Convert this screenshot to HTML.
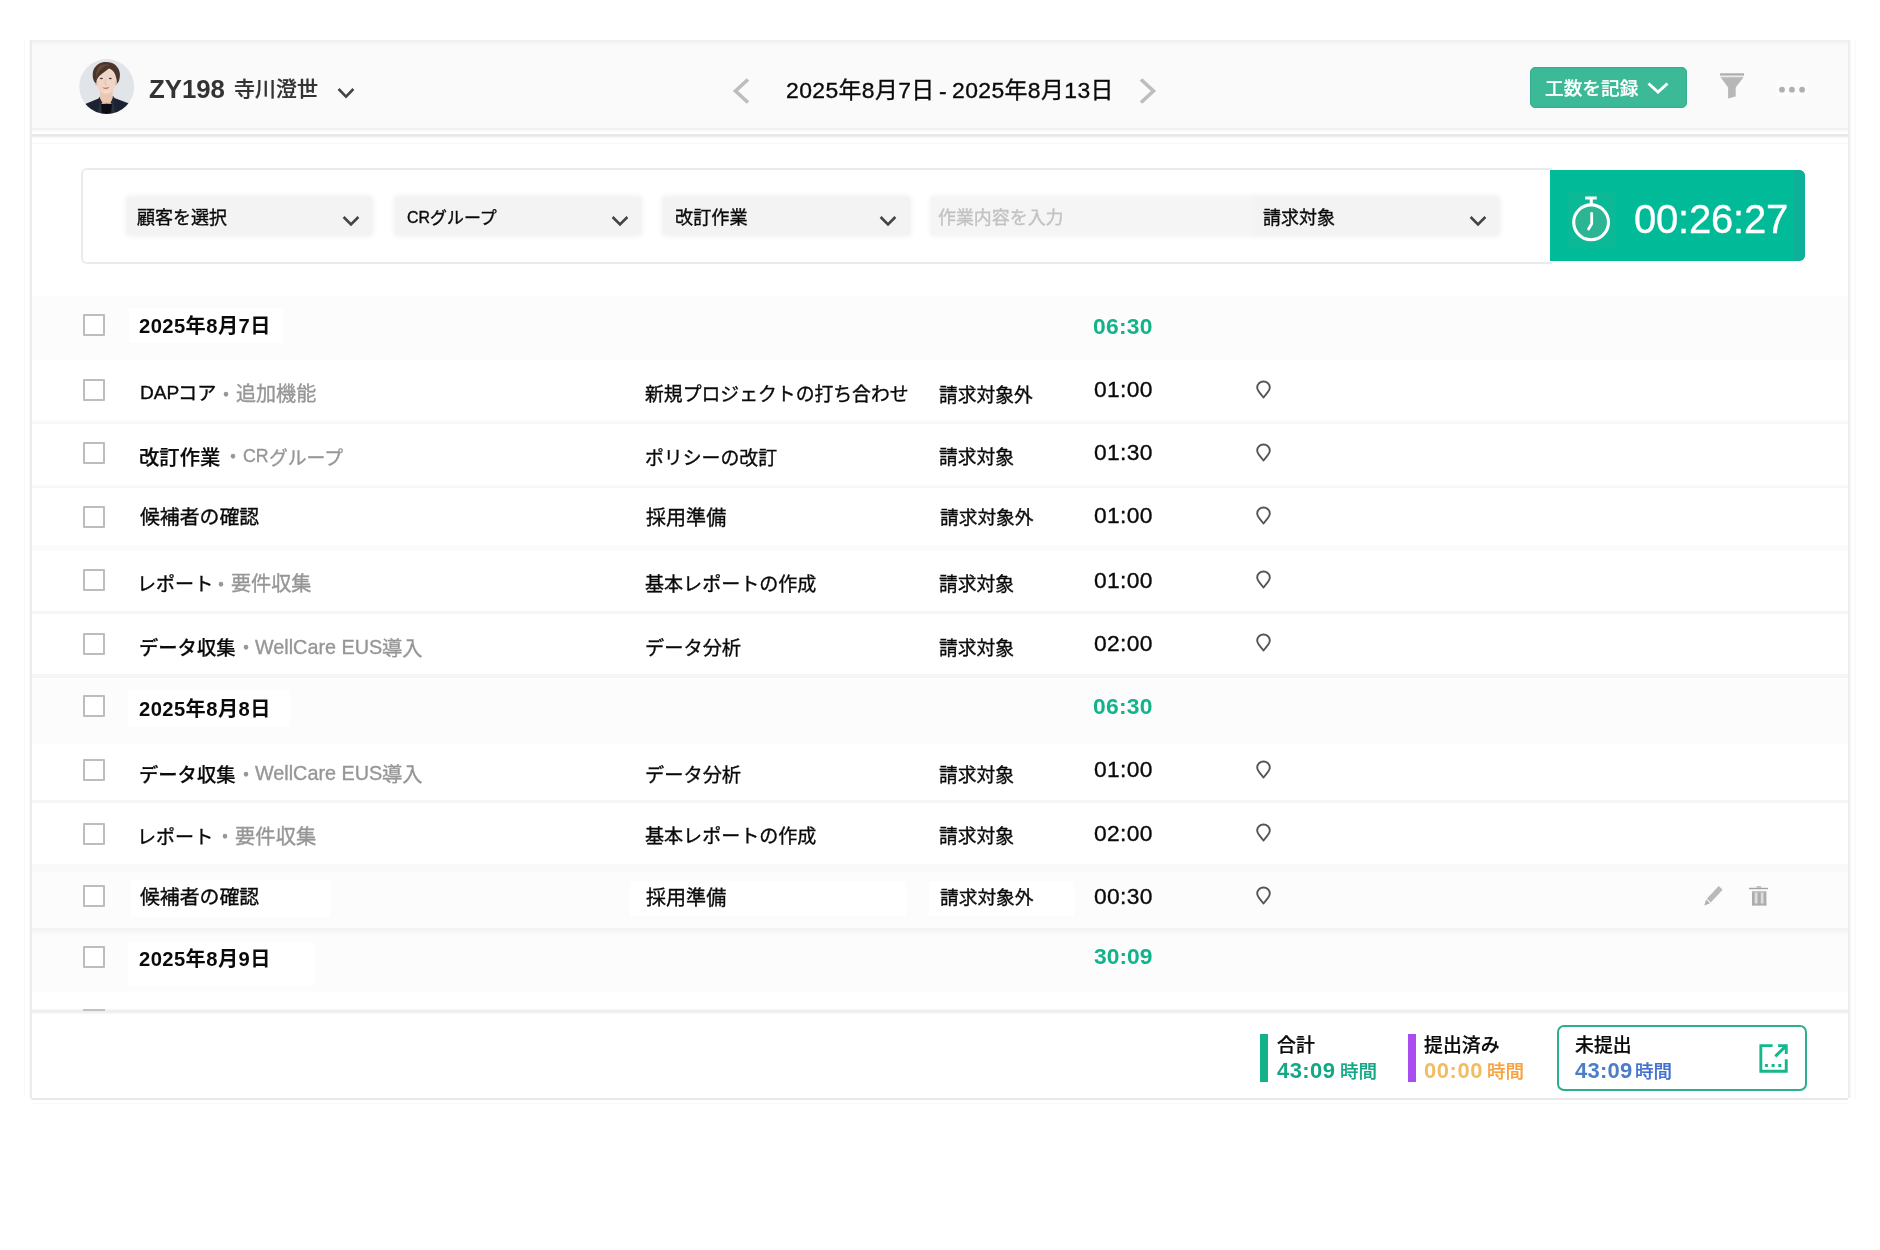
<!DOCTYPE html>
<html lang="ja">
<head>
<meta charset="utf-8">
<title>工数管理</title>
<style>
*{box-sizing:border-box;margin:0;padding:0}
html,body{width:1880px;height:1250px;background:#fff;overflow:hidden}
body{font-family:"Liberation Sans","Noto Sans CJK JP",sans-serif;color:#0a0a0a;position:relative}
.abs{position:absolute}
.t{position:absolute;white-space:nowrap;line-height:1;will-change:transform;-webkit-text-stroke:0.35px currentColor}
#frame{position:absolute;left:32px;top:40px;width:1816px;height:1058px;background:#fff}
.fl{position:absolute;left:29px;top:40px;width:3px;height:1058px;background:linear-gradient(to right,#fafafa,#f0f0f0 40%,#e8e8e8)}
.fr{position:absolute;left:1848px;top:40px;width:3px;height:1058px;background:linear-gradient(to right,#eaeaea,#f0f0f0 50%,#fafafa)}
.fb{position:absolute;left:31px;top:1097.6px;width:1817px;height:2.6px;background:linear-gradient(to bottom,#f0f0f0,#e7e7e7 40%,#e9e9e9)}
.fo{position:absolute;background:#f9f9f9}
#hdr{position:absolute;left:32px;top:40px;width:1816px;height:104px;background:linear-gradient(to bottom,#eeeeee 0,#f3f3f3 2px,#fafafa 6px,#fafafa 87.5px,#f1f1f1 88px,#f1f1f1 89.5px,#f9f9f9 90px,#ffffff 93.5px,#e9e9e9 94.3px,#e9e9e9 96.3px,#f6f6f6 97px,#ffffff 99px,#ffffff 102.5px,#f8f8f8 103px,#f8f8f8 104px)}
/* header */
#logbtn{position:absolute;left:1529.5px;top:67px;width:157px;height:40.5px;background:#3cb997;border:1px solid #35ad8c;border-radius:5px}
/* timer panel */
#panel{position:absolute;left:81px;top:168px;width:1471px;height:96px;border:2.5px solid #ebebeb;border-right:none;border-radius:6px 0 0 6px;background:#fff}
.sel{position:absolute;top:197px;height:38px;background:#f3f3f3;border-radius:3px;box-shadow:0 0 5px 2px #f3f3f3}
.sel svg{position:absolute;top:18px}
#inp{position:absolute;left:931px;top:197px;width:326px;height:38px;background:#f5f5f5;border-radius:3px 0 0 3px;box-shadow:0 0 5px 2px #f5f5f5}
#timer{position:absolute;left:1550px;top:170px;width:255px;height:91px;background:#00ba98;border-radius:0 6px 6px 0;overflow:hidden}
#timer .dk{position:absolute;right:0;top:0;width:11px;height:100%;background:#0fb09a}
#timer .ib{position:absolute;left:18px;top:22px;width:48px;height:56px;background:#0bb996}
/* rows */
.band{position:absolute;left:32px;width:1816px;background:#fafafa}
.sep{position:absolute;left:32px;width:1816px;height:2px;background:#f4f4f4}
.cb{position:absolute;left:83px;width:22px;height:22px;border:2px solid #bdbdbd;background:#fff;border-radius:1px}
.lbl{position:absolute;background:#fff}
.pin{position:absolute;left:1255px;width:17px;height:20px}
/* footer */
#ftop{position:absolute;left:32px;top:1009px;width:1816px;height:4.5px;background:linear-gradient(to bottom,#f8f8f8,#ececec 45%,#efefef 60%,#fafafa)}
#fbg{position:absolute;left:32px;top:1013px;width:1816px;height:84px;background:#fff}
.bar{position:absolute;top:1034px;width:8px;height:48px}
#ubox{position:absolute;left:1556.5px;top:1025px;width:250px;height:66.3px;border:2px solid #2bb08d;border-radius:7px;background:#fff}
</style>
</head>
<body>
<div id="frame"></div>
<div class="fl"></div><div class="fr"></div><div class="fb"></div>
<div class="fo" style="left:24px;top:40px;width:1px;height:1056px"></div><div class="fo" style="left:1855px;top:40px;width:1px;height:1058px"></div><div class="fo" style="left:32px;top:1103px;width:1816px;height:1px"></div>
<div id="hdr"></div>

<!-- avatar -->
<svg class="abs" style="left:79px;top:59px" width="56" height="56" viewBox="0 0 56 56">
  <defs><clipPath id="avc"><circle cx="27.7" cy="27.6" r="27.5"/></clipPath>
  <filter id="avb" x="-10%" y="-10%" width="120%" height="120%"><feGaussianBlur stdDeviation="0.45"/></filter></defs>
  <g clip-path="url(#avc)">
    <rect width="56" height="56" fill="#e1e5ea"/>
    <g filter="url(#avb)">
    <path d="M5 45.5 L19.5 39.5 L21 37.5 L34 37 L35.5 39 L50 44.5 L56 56 L0 56 Z" fill="#1e2432"/>
    <path d="M20.8 28 L33.6 28 L33.8 39 L31 45 L24 45 L21 39.5 Z" fill="#e9c7b3"/>
    <path d="M22.3 45.2 Q27.5 44 32.6 45 L33.5 56 L21.5 56 Z" fill="#0c0f15"/>
    <path d="M22.5 44.6 Q27.5 43.3 32.5 44.4" fill="none" stroke="#f0b48c" stroke-width="0.8"/>
    <path d="M21 38.5 L23.2 56 L19 56 Z M34 38 L31.8 56 L36 56 Z" fill="#2a3142"/>
    <ellipse cx="27.1" cy="22.6" rx="10.1" ry="12.6" fill="#eed5c6"/>
    <ellipse cx="17.2" cy="24.3" rx="1.3" ry="2.2" fill="#e2b9a3"/>
    <ellipse cx="37.3" cy="24.3" rx="1.3" ry="2.2" fill="#e2b9a3"/>
    <path d="M23 30.5 Q27.2 34 31.5 30.5 Q27.2 36.8 23 30.5 Z" fill="#f3e1d6"/>
    <path d="M15.9 23.6 C14.2 21.5 13.4 18 13.8 14 C14.4 9 18 4.6 23 3.4 C26 2.6 30 2.8 33 4 C37.5 6 40.6 10 40.9 15 C41 18.5 40.4 21 39.4 23 L38.1 24.6 C37.8 21.5 37.2 18 36 15.2 C34.6 12.2 32.4 10.3 30 9.6 C27.4 11.6 24.6 13.6 22 15.6 C20 17.2 18.4 19.3 17.6 21.4 L17.1 24.2 Z" fill="#4b352a"/>
    <path d="M20 7.5 C23 5 28 4.6 31 6.2 C27 6.4 23 8.4 20.5 12 C19 14 17.5 17 17 19.5 C16.6 15 17.5 10.5 20 7.5 Z" fill="#65493a"/>
    <ellipse cx="22.4" cy="19.4" rx="1.5" ry="0.75" fill="#3f3440"/>
    <ellipse cx="31.3" cy="19.4" rx="1.5" ry="0.75" fill="#3f3440"/>
    <path d="M26.6 20 L26 25.2 L28 25.4" fill="none" stroke="#dcb29c" stroke-width="0.7"/>
    <path d="M22.8 28.2 Q27.2 29.4 30.6 28 Q27.2 31.6 22.8 28.2 Z" fill="#d8482c"/>
    </g>
  </g>
</svg>

<svg class="abs" style="left:336px;top:86px" width="20" height="14" viewBox="0 0 20 14"><path d="M2.6 3 L10 10.6 L17.4 3" fill="none" stroke="#444" stroke-width="2.6"/></svg>

<!-- date nav -->
<svg class="abs" style="left:730px;top:76px" width="24" height="30" viewBox="0 0 24 30"><path d="M18 3.5 L5.5 15 L18 26.5" fill="none" stroke="#bdbdbd" stroke-width="3.6"/></svg>
<svg class="abs" style="left:1135px;top:76px" width="24" height="30" viewBox="0 0 24 30"><path d="M6 3.5 L18.5 15 L6 26.5" fill="none" stroke="#bdbdbd" stroke-width="3.6"/></svg>

<!-- log button -->
<div id="logbtn">
<svg class="abs" style="left:114px;top:12px" width="26" height="16" viewBox="0 0 26 16"><path d="M3.5 3.5 L13 12 L22.5 3.5" fill="none" stroke="#fff" stroke-width="3"/></svg>
</div>
<!-- filter icon -->
<svg class="abs" style="left:1718px;top:72px" width="28" height="28" viewBox="0 0 28 28">
  <rect x="2.1" y="1.3" width="23.9" height="2.4" fill="#adadad"/>
  <path d="M2.8 4.6 L25.3 4.6 L25.3 5.6 L17.7 15.6 L17.7 24.6 L10.1 26.4 L10.1 15.6 L2.8 5.6 Z" fill="#b7b7b7"/>
  <rect x="3.4" y="3.7" width="21.3" height="1.6" fill="#e9e9e9"/>
</svg>
<!-- more dots -->
<div class="abs" style="left:1776px;top:80px;width:32px;height:16px;background:#fcfcfc"></div>
<svg class="abs" style="left:1776px;top:84px" width="34" height="12" viewBox="0 0 34 12"><circle cx="6" cy="5.7" r="2.9" fill="#b0b0b0"/><circle cx="15.9" cy="5.7" r="2.9" fill="#b0b0b0"/><circle cx="26.1" cy="5.7" r="2.9" fill="#b0b0b0"/></svg>

<!-- timer panel -->
<div id="panel"></div>
<div class="sel" style="left:127px;width:245px"><svg style="left:214px" width="20" height="14" viewBox="0 0 20 14"><path d="M2.6 2 L10 9.4 L17.4 2" fill="none" stroke="#444" stroke-width="2.6"/></svg></div>
<div class="sel" style="left:395px;width:246px"><svg style="left:215px" width="20" height="14" viewBox="0 0 20 14"><path d="M2.6 2 L10 9.4 L17.4 2" fill="none" stroke="#444" stroke-width="2.6"/></svg></div>
<div class="sel" style="left:663px;width:247px"><svg style="left:215px" width="20" height="14" viewBox="0 0 20 14"><path d="M2.6 2 L10 9.4 L17.4 2" fill="none" stroke="#444" stroke-width="2.6"/></svg></div>
<div id="inp"></div>
<div class="sel" style="left:1257px;width:242px;border-radius:0 3px 3px 0"><svg style="left:210.5px" width="20" height="14" viewBox="0 0 20 14"><path d="M2.6 2 L10 9.4 L17.4 2" fill="none" stroke="#444" stroke-width="2.6"/></svg></div>
<div id="timer"><div class="dk"></div><div class="ib"></div>
<svg class="abs" style="left:18px;top:24px" width="48" height="50" viewBox="0 0 48 50">
  <circle cx="23.1" cy="28.3" r="17.4" fill="#2bb593" stroke="#fff" stroke-width="3.1"/>
  <path d="M17.2 4 L28.7 4 M23.3 5 L23.3 10.5" fill="none" stroke="#fff" stroke-width="3.1"/>
  <path d="M23.7 19.5 L23.7 29.7 L20.6 35" fill="none" stroke="#fff" stroke-width="2.8" stroke-linecap="round" stroke-linejoin="round"/>
</svg>
</div>

<!-- ROWS -->
<div class="band" style="top:296px;height:64px;background:#fcfcfc"></div>
<div class="lbl" style="left:129px;top:308px;width:154px;height:35px"></div>
<div class="cb" style="top:314px"></div>
<div class="cb" style="top:379px"></div>
<svg class="pin" style="top:379.8px" viewBox="0 0 17 20"><path d="M8.5 17.6 C6.3 14.2 2.2 11.2 2.2 7.5 C2.2 4 5 1.5 8.5 1.5 C12 1.5 14.8 4 14.8 7.5 C14.8 11.2 10.7 14.2 8.5 17.6 Z" fill="none" stroke="#555" stroke-width="1.9" stroke-linejoin="round"/></svg>
<div class="sep" style="top:419px;height:5px;background:linear-gradient(to bottom,#ffffff,#f5f5f5)"></div>
<div class="cb" style="top:442px"></div>
<svg class="pin" style="top:443.2px" viewBox="0 0 17 20"><path d="M8.5 17.6 C6.3 14.2 2.2 11.2 2.2 7.5 C2.2 4 5 1.5 8.5 1.5 C12 1.5 14.8 4 14.8 7.5 C14.8 11.2 10.7 14.2 8.5 17.6 Z" fill="none" stroke="#555" stroke-width="1.9" stroke-linejoin="round"/></svg>
<div class="sep" style="top:483.8px;height:4.2px;background:linear-gradient(to bottom,#ffffff,#f5f5f5)"></div>
<div class="cb" style="top:505.5px"></div>
<svg class="pin" style="top:506.4px" viewBox="0 0 17 20"><path d="M8.5 17.6 C6.3 14.2 2.2 11.2 2.2 7.5 C2.2 4 5 1.5 8.5 1.5 C12 1.5 14.8 4 14.8 7.5 C14.8 11.2 10.7 14.2 8.5 17.6 Z" fill="none" stroke="#555" stroke-width="1.9" stroke-linejoin="round"/></svg>
<div class="sep" style="top:545px;height:5.5px;background:#fbfbfb"></div>
<div class="cb" style="top:568.7px"></div>
<svg class="pin" style="top:569.6px" viewBox="0 0 17 20"><path d="M8.5 17.6 C6.3 14.2 2.2 11.2 2.2 7.5 C2.2 4 5 1.5 8.5 1.5 C12 1.5 14.8 4 14.8 7.5 C14.8 11.2 10.7 14.2 8.5 17.6 Z" fill="none" stroke="#555" stroke-width="1.9" stroke-linejoin="round"/></svg>
<div class="sep" style="top:611px;height:2.6px;background:#f6f6f6"></div>
<div class="cb" style="top:632.5px"></div>
<svg class="pin" style="top:633.1px" viewBox="0 0 17 20"><path d="M8.5 17.6 C6.3 14.2 2.2 11.2 2.2 7.5 C2.2 4 5 1.5 8.5 1.5 C12 1.5 14.8 4 14.8 7.5 C14.8 11.2 10.7 14.2 8.5 17.6 Z" fill="none" stroke="#555" stroke-width="1.9" stroke-linejoin="round"/></svg>
<div class="sep" style="top:674.2px;height:3.4px;background:#f6f6f6"></div>
<div class="band" style="top:677.6px;height:66.4px;background:#fcfcfc"></div>
<div class="lbl" style="left:128px;top:690px;width:162px;height:37px"></div>
<div class="cb" style="top:695.3px"></div>
<div class="cb" style="top:759px"></div>
<svg class="pin" style="top:759.9px" viewBox="0 0 17 20"><path d="M8.5 17.6 C6.3 14.2 2.2 11.2 2.2 7.5 C2.2 4 5 1.5 8.5 1.5 C12 1.5 14.8 4 14.8 7.5 C14.8 11.2 10.7 14.2 8.5 17.6 Z" fill="none" stroke="#555" stroke-width="1.9" stroke-linejoin="round"/></svg>
<div class="sep" style="top:799.5px;height:3px;background:#f6f6f6"></div>
<div class="cb" style="top:822.5px"></div>
<svg class="pin" style="top:823.4px" viewBox="0 0 17 20"><path d="M8.5 17.6 C6.3 14.2 2.2 11.2 2.2 7.5 C2.2 4 5 1.5 8.5 1.5 C12 1.5 14.8 4 14.8 7.5 C14.8 11.2 10.7 14.2 8.5 17.6 Z" fill="none" stroke="#555" stroke-width="1.9" stroke-linejoin="round"/></svg>
<div class="band" style="top:864px;height:8px;background:#f9f9f9"></div>
<div class="band" style="top:872px;height:56px;background:#fcfcfc"></div>
<div class="lbl" style="left:131px;top:880px;width:199px;height:37px"></div>
<div class="lbl" style="left:630px;top:881px;width:276px;height:35px"></div>
<div class="lbl" style="left:929px;top:881px;width:145px;height:35px"></div>
<div class="cb" style="top:885.3px"></div>
<svg class="pin" style="top:886.4px" viewBox="0 0 17 20"><path d="M8.5 17.6 C6.3 14.2 2.2 11.2 2.2 7.5 C2.2 4 5 1.5 8.5 1.5 C12 1.5 14.8 4 14.8 7.5 C14.8 11.2 10.7 14.2 8.5 17.6 Z" fill="none" stroke="#555" stroke-width="1.9" stroke-linejoin="round"/></svg>
<div class="sep" style="top:928px;height:8px;background:linear-gradient(to bottom,#f2f2f2,#f6f6f6 40%,#fcfcfc)"></div>
<div class="band" style="top:936px;height:56.3px;background:#fcfcfc"></div>
<div class="lbl" style="left:128px;top:942px;width:186px;height:44px"></div>
<div class="cb" style="top:946px"></div>
<div class="cb" style="top:1008.7px"></div>
<div class="t" style="left:939.62px;top:1011px;font-size:18.72px">請求対象</div>
<div class="t" style="left:1093.89px;top:1006.6px;font-size:22.8px;letter-spacing:0.33px">01:00</div>
<svg class="abs" style="left:1702px;top:884px" width="24" height="24" viewBox="0 0 24 24"><path d="M2.3 21.4 L8.02 19.22 L4.08 15.54 Z" fill="#b0b0b0"/><path d="M8.77 18.42 L4.83 14.74 L16.7 2.02 L20.64 5.7 Z" fill="#b9b9b9"/></svg>
<svg class="abs" style="left:1749px;top:884px" width="20" height="24" viewBox="0 0 20 24"><rect x="0" y="3.8" width="19" height="1.4" fill="#a2a2a2"/><rect x="7.6" y="2" width="4.6" height="2" fill="#c4c4c4"/><rect x="3" y="7.3" width="14.3" height="14.1" fill="#dedede"/><rect x="3" y="7.3" width="2.7" height="14.1" fill="#adadad"/><rect x="8.5" y="7.3" width="3.3" height="14.1" fill="#adadad"/><rect x="14.5" y="7.3" width="2.8" height="14.1" fill="#adadad"/><rect x="3" y="19.5" width="14.3" height="1.9" fill="#adadad"/><rect x="3" y="7.3" width="14.3" height="1.4" fill="#bdbdbd"/></svg>

<!-- footer -->
<div id="fbg"></div>
<div id="ftop"></div>
<div class="abs" style="left:83px;top:1008.7px;width:22px;height:2.3px;background:#c2c2c2"></div>
<div class="bar" style="left:1260px;background:#12b38b"></div>
<div class="bar" style="left:1408px;background:#a94df0"></div>
<div id="ubox"></div>
<svg class="abs" style="left:1757px;top:1042px" width="34" height="34" viewBox="0 0 34 34">
  <path d="M15.6 3.65 L3.85 3.65 L3.85 29.25 L29.25 29.25 L29.25 17.3" fill="none" stroke="#14b88a" stroke-width="2.9"/>
  <path d="M18.3 14.4 L28.3 4.6 M21.1 3.65 L29.25 3.65 L29.25 12" fill="none" stroke="#14b88a" stroke-width="2.9"/>
  <path d="M7.9 23.5 L10.9 23.5 M14.6 23.5 L17.6 23.5 M21.3 23.5 L24.3 23.5" fill="none" stroke="#14b88a" stroke-width="2.8"/>
</svg>
<div class="t" style="left:149.39px;top:77.3px;font-size:25.789px;font-weight:700;-webkit-text-stroke:0;color:#333">ZY198</div>
<div class="t" style="left:233.62px;top:78.29px;font-size:20.984px;font-weight:500;-webkit-text-stroke:0.22px currentColor;color:#333">寺川澄世</div>
<div class="t" style="left:786.05px;top:78.98px;font-size:22.9px;letter-spacing:0.397px">2025年8月7日</div>
<div class="t" style="left:939.34px;top:80.17px;font-size:23px">-</div>
<div class="t" style="left:952.22px;top:79.38px;font-size:22.9px;letter-spacing:0.41px">2025年8月13日</div>
<div class="t" style="left:1545.0px;top:79.56px;font-size:18.661px;font-weight:500;-webkit-text-stroke:0.22px currentColor;color:#fff">工数を記録</div>
<div class="t" style="left:136.61px;top:209.34px;font-size:18.018px">顧客を選択</div>
<div class="t" style="left:406.83px;top:209.87px;font-size:15.891px">CR</div>
<div class="t" style="left:429.94px;top:211.18px;font-size:16.948px">グループ</div>
<div class="t" style="left:675.39px;top:209.34px;font-size:18.131px">改訂作業</div>
<div class="t" style="left:938.38px;top:210.28px;font-size:17.952px;color:#c2c2c2">作業内容を入力</div>
<div class="t" style="left:1262.5px;top:210.18px;font-size:17.976px">請求対象</div>
<div class="t" style="left:1633.82px;top:199.13px;font-size:40px;letter-spacing:-0.198px;color:#fff">00:26:27</div>
<div class="t" style="left:139.38px;top:316.26px;font-size:20.2px;letter-spacing:0.427px;font-weight:700;-webkit-text-stroke:0">2025年8月7日</div>
<div class="t" style="left:1092.71px;top:314.77px;font-size:22.8px;letter-spacing:0.27px;font-weight:700;-webkit-text-stroke:0;color:#12b38b">06:30</div>
<div class="t" style="left:139.38px;top:699.16px;font-size:20.2px;letter-spacing:0.427px;font-weight:700;-webkit-text-stroke:0">2025年8月8日</div>
<div class="t" style="left:1092.71px;top:694.77px;font-size:22.8px;letter-spacing:0.27px;font-weight:700;-webkit-text-stroke:0;color:#12b38b">06:30</div>
<div class="t" style="left:139.38px;top:948.7px;font-size:20.2px;letter-spacing:0.427px;font-weight:700;-webkit-text-stroke:0">2025年8月9日</div>
<div class="t" style="left:1094.06px;top:944.87px;font-size:22.8px;letter-spacing:0.009px;font-weight:700;-webkit-text-stroke:0;color:#12b38b">30:09</div>
<div class="t" style="left:139.67px;top:383.42px;font-size:19.109px">DAP</div>
<div class="t" style="left:178.01px;top:383.91px;font-size:19.168px">コア</div>
<div class="t" style="left:216.28px;top:384.82px;font-size:20px;color:#969696">・</div>
<div class="t" style="left:235.67px;top:384.14px;font-size:20.076px;color:#969696">追加機能</div>
<div class="t" style="left:644.83px;top:386.18px;font-size:18.849px">新規プロジェクトの打ち合わせ</div>
<div class="t" style="left:939.45px;top:386.52px;font-size:18.768px">請求対象外</div>
<div class="t" style="left:1093.89px;top:378.38px;font-size:22.8px;letter-spacing:0.33px">01:00</div>
<div class="t" style="left:139.09px;top:447.54px;font-size:20.327px;font-weight:500;-webkit-text-stroke:0.22px currentColor">改訂作業</div>
<div class="t" style="left:223.28px;top:447.48px;font-size:20px;color:#969696">・</div>
<div class="t" style="left:243.09px;top:448.35px;font-size:17.722px;color:#969696">CR</div>
<div class="t" style="left:268.55px;top:449.53px;font-size:18.797px;color:#969696">グループ</div>
<div class="t" style="left:644.72px;top:449.57px;font-size:18.881px">ポリシーの改訂</div>
<div class="t" style="left:939.48px;top:449.28px;font-size:18.808px">請求対象</div>
<div class="t" style="left:1093.89px;top:441.48px;font-size:22.8px;letter-spacing:0.33px">01:30</div>
<div class="t" style="left:140.02px;top:507.78px;font-size:19.861px">候補者の確認</div>
<div class="t" style="left:645.92px;top:507.53px;font-size:20.057px">採用準備</div>
<div class="t" style="left:939.62px;top:509.0px;font-size:18.72px">請求対象外</div>
<div class="t" style="left:1093.89px;top:504.48px;font-size:22.8px;letter-spacing:0.33px">01:00</div>
<div class="t" style="left:137.09px;top:575.48px;font-size:19.062px">レポート</div>
<div class="t" style="left:211.28px;top:574.7px;font-size:20px;color:#969696">・</div>
<div class="t" style="left:230.59px;top:574.39px;font-size:20.134px;color:#969696">要件収集</div>
<div class="t" style="left:644.78px;top:575.29px;font-size:19.051px">基本レポートの作成</div>
<div class="t" style="left:939.48px;top:576.28px;font-size:18.808px">請求対象</div>
<div class="t" style="left:1093.89px;top:568.5px;font-size:22.8px;letter-spacing:0.33px">01:00</div>
<div class="t" style="left:139.23px;top:638.82px;font-size:19.307px;font-weight:500;-webkit-text-stroke:0.22px currentColor">データ収集</div>
<div class="t" style="left:235.5px;top:638.48px;font-size:20px;color:#969696">・</div>
<div class="t" style="left:255.26px;top:638.09px;font-size:19.794px;color:#969696">WellCare EUS</div>
<div class="t" style="left:381.64px;top:639.17px;font-size:20.244px;color:#969696">導入</div>
<div class="t" style="left:644.92px;top:639.46px;font-size:19.23px">データ分析</div>
<div class="t" style="left:939.48px;top:639.84px;font-size:18.808px">請求対象</div>
<div class="t" style="left:1093.89px;top:631.82px;font-size:22.8px;letter-spacing:0.33px">02:00</div>
<div class="t" style="left:139.23px;top:765.76px;font-size:19.307px;font-weight:500;-webkit-text-stroke:0.22px currentColor">データ収集</div>
<div class="t" style="left:235.5px;top:764.7px;font-size:20px;color:#969696">・</div>
<div class="t" style="left:255.26px;top:764.31px;font-size:19.794px;color:#969696">WellCare EUS</div>
<div class="t" style="left:381.64px;top:765.39px;font-size:20.244px;color:#969696">導入</div>
<div class="t" style="left:644.92px;top:765.59px;font-size:19.23px">データ分析</div>
<div class="t" style="left:939.48px;top:766.52px;font-size:18.808px">請求対象</div>
<div class="t" style="left:1093.89px;top:758.26px;font-size:22.8px;letter-spacing:0.33px">01:00</div>
<div class="t" style="left:137.09px;top:827.7px;font-size:19.062px">レポート</div>
<div class="t" style="left:215.0px;top:827.38px;font-size:20px;color:#969696">・</div>
<div class="t" style="left:234.62px;top:826.87px;font-size:20.344px;color:#969696">要件収集</div>
<div class="t" style="left:644.78px;top:827.29px;font-size:19.051px">基本レポートの作成</div>
<div class="t" style="left:939.48px;top:828.28px;font-size:18.808px">請求対象</div>
<div class="t" style="left:1093.89px;top:822.16px;font-size:22.8px;letter-spacing:0.33px">02:00</div>
<div class="t" style="left:140.02px;top:887.78px;font-size:19.861px">候補者の確認</div>
<div class="t" style="left:645.92px;top:887.82px;font-size:20.057px">採用準備</div>
<div class="t" style="left:939.62px;top:888.58px;font-size:18.72px">請求対象外</div>
<div class="t" style="left:1093.89px;top:884.94px;font-size:22.8px;letter-spacing:0.33px">00:30</div>
<div class="t" style="left:1276.66px;top:1037.09px;font-size:18.9px;font-weight:500;-webkit-text-stroke:0.22px currentColor">合計</div>
<div class="t" style="left:1277.04px;top:1060.22px;font-size:22px;letter-spacing:0.399px;font-weight:700;-webkit-text-stroke:0;color:#12a886">43:09</div>
<div class="t" style="left:1340.0px;top:1063.44px;font-size:18.5px;font-weight:500;-webkit-text-stroke:0.22px currentColor;color:#12a886">時間</div>
<div class="t" style="left:1424.11px;top:1037.09px;font-size:18.9px;font-weight:500;-webkit-text-stroke:0.22px currentColor">提出済み</div>
<div class="t" style="left:1424.24px;top:1060.22px;font-size:22px;letter-spacing:0.549px;font-weight:700;-webkit-text-stroke:0;color:#f2bc62">00:00</div>
<div class="t" style="left:1487.29px;top:1063.44px;font-size:18.5px;font-weight:500;-webkit-text-stroke:0.22px currentColor;color:#f9a23e">時間</div>
<div class="t" style="left:1574.6px;top:1037.09px;font-size:18.9px;font-weight:500;-webkit-text-stroke:0.22px currentColor">未提出</div>
<div class="t" style="left:1574.5px;top:1060.22px;font-size:22px;letter-spacing:0.216px;font-weight:700;-webkit-text-stroke:0;color:#4b7dc8">43:09</div>
<div class="t" style="left:1634.94px;top:1063.44px;font-size:18.5px;font-weight:500;-webkit-text-stroke:0.22px currentColor;color:#4070d0">時間</div>
</body>
</html>
